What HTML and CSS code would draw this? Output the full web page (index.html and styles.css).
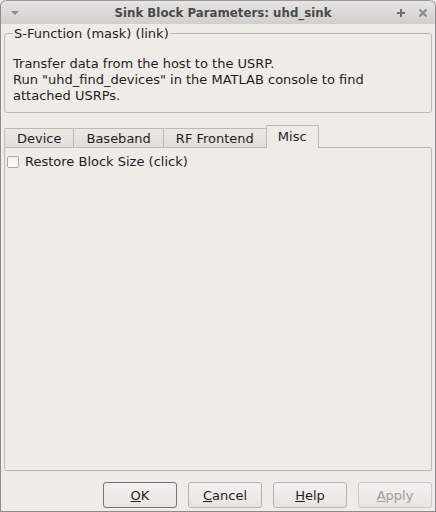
FILE: index.html
```html
<!DOCTYPE html>
<html>
<head>
<meta charset="utf-8">
<link rel="stylesheet" href="styles.css">
</head>
<body>
<div class="window">
  <div class="titlebar">
    <svg class="menu-arrow" width="10" height="6" viewBox="0 0 10 6"><path d="M1 1 L9 1 L5 5 Z" fill="#8d8d8d"/></svg>
    <div class="title">Sink Block Parameters: uhd_sink</div>
    <div class="controls">
      <svg width="10" height="10" viewBox="0 0 10 10"><path d="M5 1 V9 M1 5 H9" stroke="#6e6e6e" stroke-width="2"/></svg>
      <svg width="10" height="10" viewBox="0 0 10 10"><path d="M1.5 1.5 L8.5 8.5 M8.5 1.5 L1.5 8.5" stroke="#8a8a8a" stroke-width="2"/></svg>
    </div>
  </div>
  <div class="body">
    <fieldset class="group">
      <legend>S-Function (mask) (link)</legend>
      <p class="desc">Transfer data from the host to the USRP.<br>Run "uhd_find_devices" in the MATLAB console to find<br>attached USRPs.</p>
    </fieldset>
    <div class="tabs">
      <div class="tab">Device</div>
      <div class="tab">Baseband</div>
      <div class="tab">RF Frontend</div>
      <div class="tab active">Misc</div>
    </div>
    <div class="pane">
      <label class="check"><span class="box"></span>Restore Block Size (click)</label>
    </div>
    <div class="buttons">
      <button class="btn default"><u>O</u>K</button>
      <button class="btn"><u>C</u>ancel</button>
      <button class="btn"><u>H</u>elp</button>
      <button class="btn disabled"><u>A</u>pply</button>
    </div>
  </div>
</div>
</body>
</html>
```
FILE: styles.css
```css
html, body {
  margin: 0;
  padding: 0;
  background: #edebe8;
}
body {
  font-family: "DejaVu Sans", sans-serif;
  font-size: 13px;
  color: #1e1e1e;
}
.window {
  width: 436px;
  height: 512px;
  box-sizing: border-box;
  border: 1px solid #8c8c8c;
  border-top: none;
  border-radius: 6px 6px 0 0;
  background: #efebe7;
  display: flex;
  flex-direction: column;
  overflow: hidden;
}
.titlebar {
  height: 24px;
  flex: none;
  display: flex;
  align-items: center;
  background: linear-gradient(#e6e5e3, #d0cfcd);
  border-top: 1px solid #9a9a9a;
  border-radius: 6px 6px 0 0;
  box-sizing: border-box;
}
.menu-arrow {
  margin-left: 9px;
}
.title {
  flex: 1;
  text-align: center;
  font-weight: bold;
  font-size: 11.8px;
  color: #4a4a4a;
  margin-left: 30px;
}
.controls {
  display: flex;
  gap: 12px;
  margin-right: 7px;
}
.body {
  flex: 1;
  display: flex;
  flex-direction: column;
  padding: 0 3px 3px 3px;
}
.group {
  margin: 2px 0 0 0;
  padding: 15px 8px 8px 8px;
  border: 1px solid #bdb9b4;
  border-radius: 3px;
  min-height: 0;
}
.group legend {
  padding: 0 1px;
  margin-left: 0;
  color: #1e1e1e;
}
.desc {
  margin: 0;
  line-height: 16px;
}
.tabs {
  display: flex;
  align-items: flex-end;
  margin-top: 11px;
  height: 23px;
  position: relative;
  z-index: 1;
}
.tab {
  height: 19px;
  box-sizing: border-box;
  padding: 1px 12px 0 12px;
  border: 1px solid #bdb9b4;
  border-bottom: none;
  margin-right: -1px;
  border-radius: 2px 2px 0 0;
  background: linear-gradient(#ece9e5, #e2dfda);
  line-height: 18px;
}
.tab.active {
  height: 23px;
  background: #efebe7;
  padding: 2px 11px 0 11px;
  margin-bottom: -1px;
}
.pane {
  flex: 1;
  border: 1px solid #bdb9b4;
  border-radius: 0 2px 2px 2px;
  padding: 6px 2px;
}
.check {
  display: flex;
  align-items: center;
}
.box {
  width: 10px;
  height: 10px;
  border: 1px solid #aaa6a1;
  border-radius: 2px;
  background: linear-gradient(#f4f2f0, #fbfbfa);
  margin-right: 6px;
}
.buttons {
  display: flex;
  justify-content: flex-end;
  gap: 11px;
  padding-top: 11px;
}
.btn {
  width: 74px;
  height: 26px;
  font-family: "DejaVu Sans", sans-serif;
  font-size: 13px;
  color: #1e1e1e;
  border: 1px solid #b5b1ac;
  border-radius: 3px;
  background: linear-gradient(#f3f1ef, #e7e4e0);
  padding: 0;
}
.btn.default {
  border-color: #77736f;
}
.btn.disabled {
  color: #a19d98;
  border-color: #cdc9c4;
}
```
